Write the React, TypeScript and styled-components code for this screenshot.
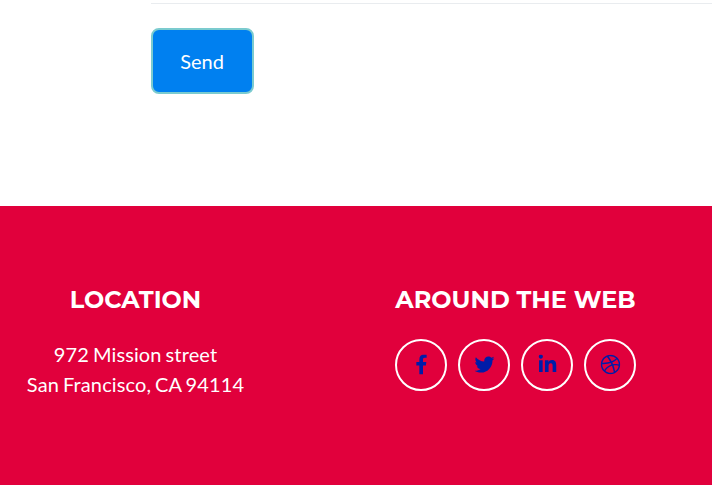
import React from "react";
import styled, { createGlobalStyle } from "styled-components";
import { FaDribbble, FaLinkedinIn, FaTwitter } from "react-icons/fa";

const GlobalStyle = createGlobalStyle`
  *, *::before, *::after { box-sizing: border-box; }
  body {
    margin: 0;
    background: #fff;
    font-family: Lato, sans-serif;
    overflow: hidden;
  }
`;

const Page = styled.div`
  width: 712px;
  height: 485px;
  display: flex;
  flex-direction: column;
  overflow: hidden;
`;

const ContactForm = styled.form`
  height: 206px;
  flex: none;
  padding: 3px 0 0 151px;
`;

const FieldRule = styled.div`
  height: 1px;
  background: #e9ecef;
  margin-bottom: 24px;
`;

const SendButton = styled.button`
  display: block;
  width: 103px;
  height: 66px;
  padding: 0 1px 0 0;
  border: 2px solid #7bcbcf;
  border-radius: 8px;
  background: #0080f0;
  color: #fff;
  font: 400 20px/30px Lato, sans-serif;
`;

const Footer = styled.footer`
  flex: 1;
  display: grid;
  grid-template-columns: 271px 489px;
  padding-top: 79px;
  background: #e1003c;
  color: #fff;
  text-align: center;
`;

const Column = styled.section`
  display: flex;
  flex-direction: column;
  align-items: center;
`;

const Heading = styled.h4`
  margin: 0 0 24px;
  font: 700 24px/29px Montserrat, Inter, sans-serif;
  text-transform: uppercase;
  white-space: nowrap;
`;

const Address = styled.p`
  margin: 0;
  padding-top: 1px;
  font-size: 20px;
  line-height: 30px;
  letter-spacing: 0.11px;
  word-spacing: -1.2px;
`;

const SocialLinks = styled.div`
  display: flex;
  gap: 11px;
  padding-top: 1px;
`;

const SocialLink = styled.a`
  display: flex;
  align-items: center;
  justify-content: center;
  width: 52px;
  height: 52px;
  border: 2px solid #fff;
  border-radius: 50%;
  color: #001ca8;
  font-size: 20px;

  svg {
    transform: translate(0.5px, -0.5px);
  }
`;

const FacebookIcon = () => (
  <svg viewBox="0 0 264 512" width="1em" height="1em" fill="currentColor">
    <path d="M76.7 512V283H0v-91h76.7v-71.7C76.7 42.4 124.3 0 193.8 0c33.3 0 61.9 2.5 70.2 3.6V85h-48.2c-37.8 0-45.1 18-45.1 44.3V192H256l-11.7 91h-73.6v229" />
  </svg>
);

const networks = [
  { name: "Facebook", Icon: FacebookIcon },
  { name: "Twitter", Icon: FaTwitter },
  { name: "LinkedIn", Icon: FaLinkedinIn },
  { name: "Dribbble", Icon: FaDribbble },
];

export default function App() {
  return (
    <>
      <GlobalStyle />
      <Page>
        <ContactForm>
          <FieldRule />
          <SendButton type="button">Send</SendButton>
        </ContactForm>
        <Footer>
          <Column>
            <Heading>Location</Heading>
            <Address>
              972 Mission street
              <br />
              San Francisco, CA 94114
            </Address>
          </Column>
          <Column>
            <Heading>Around the Web</Heading>
            <SocialLinks>
              {networks.map(({ name, Icon }) => (
                <SocialLink key={name} href="#" aria-label={name}>
                  <Icon />
                </SocialLink>
              ))}
            </SocialLinks>
          </Column>
        </Footer>
      </Page>
    </>
  );
}
